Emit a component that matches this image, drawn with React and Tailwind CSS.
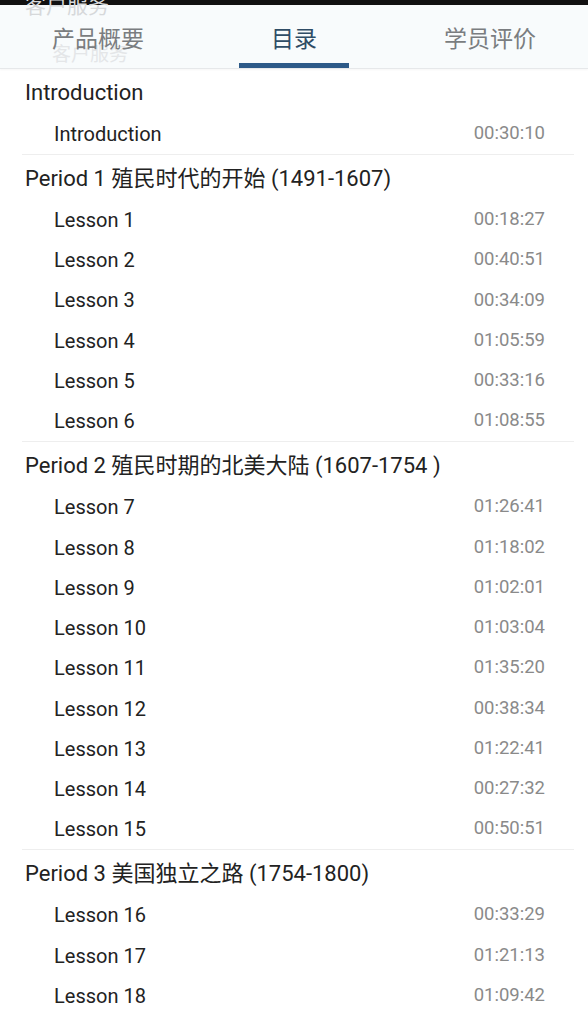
import React from 'react'

const font = { fontFamily: 'Roboto, "Noto Sans CJK SC", sans-serif' }

const sections = [
    {
        title: 'Introduction',
        lessons: [['Introduction', '00:30:10']],
    },
    {
        title: 'Period 1 殖民时代的开始 (1491-1607)',
        lessons: [
            ['Lesson 1', '00:18:27'],
            ['Lesson 2', '00:40:51'],
            ['Lesson 3', '00:34:09'],
            ['Lesson 4', '01:05:59'],
            ['Lesson 5', '00:33:16'],
            ['Lesson 6', '01:08:55'],
        ],
    },
    {
        title: 'Period 2 殖民时期的北美大陆 (1607-1754 )',
        lessons: [
            ['Lesson 7', '01:26:41'],
            ['Lesson 8', '01:18:02'],
            ['Lesson 9', '01:02:01'],
            ['Lesson 10', '01:03:04'],
            ['Lesson 11', '01:35:20'],
            ['Lesson 12', '00:38:34'],
            ['Lesson 13', '01:22:41'],
            ['Lesson 14', '00:27:32'],
            ['Lesson 15', '00:50:51'],
        ],
    },
    {
        title: 'Period 3 美国独立之路 (1754-1800)',
        lessons: [
            ['Lesson 16', '00:33:29'],
            ['Lesson 17', '01:21:13'],
            ['Lesson 18', '01:09:42'],
        ],
    },
]

function Tabs() {
    const tabs = ['产品概要', '目录', '学员评价']
    return (
        <div className="relative bg-[#f8fbfc] border-b border-[#e6e8ea] shadow-[0_1px_2px_rgba(0,0,0,0.04)]">
            {/* ghost text left over from the previous page */}
            <span className="absolute left-[25px] top-[-9px] text-[21px] text-[#d6d8da] leading-none pointer-events-none">
                客户服务
            </span>
            <span className="absolute left-[52px] top-[40px] text-[19px] text-[#e4e6e8] leading-none pointer-events-none">
                客户服务
            </span>
            <div className="relative grid grid-cols-3 h-[63px]">
                {tabs.map((t, i) => (
                    <div key={t} className="relative flex justify-center pt-[20px]">
                        <span
                            className={
                                'text-[23px] leading-[30px] ' +
                                (i === 1 ? 'text-[#2f4d66]' : 'text-[#7a7d80]')
                            }
                        >
                            {t}
                        </span>
                        {i === 1 && (
                            <div className="absolute bottom-0 h-[5px] w-[110px] bg-[#2d5a88]" />
                        )}
                    </div>
                ))}
            </div>
        </div>
    )
}

export default function App() {
    return (
        <div className="min-h-screen bg-white overflow-hidden" style={font}>
            <div className="h-[5px] bg-[#111111]" />
            <Tabs />
            <div className="pl-[22px] pr-[14px]">
                {sections.map((s, si) => (
                    <div key={s.title} className={si > 0 ? 'border-t border-[#eeeeee]' : ''}>
                        <div className="h-[44.8px] flex items-center pt-[2px] px-[3px] text-[22px] text-[#222222]">
                            {s.title}
                        </div>
                        {s.lessons.map(([name, time]) => (
                            <div
                                key={name + time}
                                className="h-[40.25px] flex items-center justify-between pl-[32px] pr-[29px]"
                            >
                                <span className="text-[20px] text-[#222222]">{name}</span>
                                <span className="text-[18.5px] text-[#8a8a8a]">{time}</span>
                            </div>
                        ))}
                    </div>
                ))}
            </div>
        </div>
    )
}
